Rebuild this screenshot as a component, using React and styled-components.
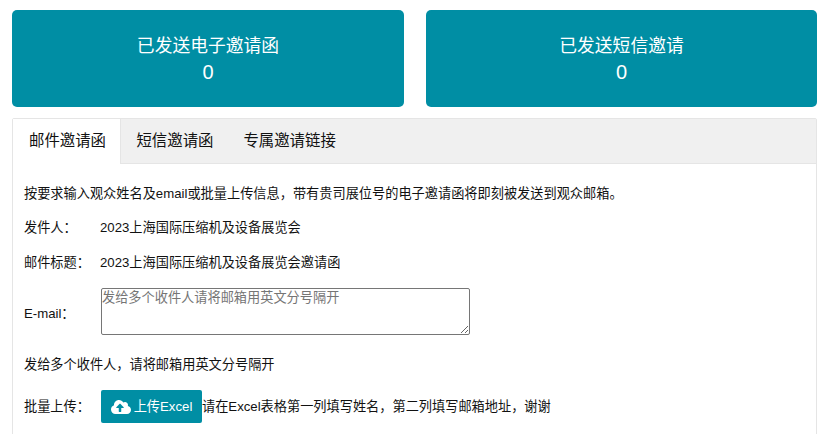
import React from "react";
import styled, { createGlobalStyle } from "styled-components";
import { FaCloudUploadAlt } from "react-icons/fa";

const colors = {
  teal: "#008ea4",
  border: "#e5e5e5",
  tabBar: "#f0f0f0",
  text: "#111111",
};

const GlobalStyle = createGlobalStyle`
  html, body {
    margin: 0;
    padding: 0;
    background: #fff;
    overflow: hidden;
    font-family: "Liberation Sans", "Noto Sans CJK SC", sans-serif;
    color: ${colors.text};
  }
`;

const Page = styled.div`
  width: 827px;
  height: 434px;
  overflow: hidden;
  box-sizing: border-box;
  padding: 10px 10px 0 12px;
`;

const StatRow = styled.div`
  display: grid;
  grid-template-columns: 392px 391px;
  column-gap: 22px;
`;

const StatCard = styled.div`
  height: 97px;
  background: ${colors.teal};
  border-radius: 5px;
  color: #fff;
  display: flex;
  flex-direction: column;
  align-items: center;
  justify-content: center;
  font-size: 17.8px;
  line-height: 26px;
`;

const StatValue = styled.div`
  font-size: 20px;
`;

const TabBox = styled.div`
  margin-top: 11px;
  width: 805px;
  border: 1px solid ${colors.border};
  border-radius: 2px 2px 0 0;
  box-sizing: border-box;
`;

const TabBar = styled.div`
  display: flex;
  height: 45px;
  background: ${colors.tabBar};
  border-bottom: 1px solid ${colors.border};
  box-sizing: border-box;
`;

const Tab = styled.div`
  padding: ${(p) => (p.$active ? "0 14.5px 0 16px" : "0 15px")};
  height: ${(p) => (p.$active ? "45px" : "44px")};
  line-height: 44px;
  font-size: 15.4px;
  box-sizing: border-box;
  background: ${(p) => (p.$active ? "#fff" : "transparent")};
  border-right: ${(p) => (p.$active ? `1px solid ${colors.border}` : "none")};
`;

const TabContent = styled.div`
  padding: 21px 11px 0;
  font-size: 13.2px;
  line-height: 18px;
`;

const Row = styled.div`
  display: flex;
  align-items: center;
  margin-bottom: ${(p) => p.$gap ?? 17}px;
`;

const Label = styled.div`
  width: 76px;
  flex: none;
  padding-top: ${(p) => p.$drop ?? 0}px;
`;

const EmailInput = styled.textarea`
  width: 369px;
  height: 47px;
  margin: 0 0 0 1px;
  padding: 0;
  box-sizing: border-box;
  border: 1px solid #767676;
  border-radius: 2px;
  font-family: inherit;
  font-size: 13.2px;
  line-height: 18px;
  background: #fff;

  &::placeholder {
    color: #757575;
  }
`;

const UploadButton = styled.div`
  width: 101px;
  height: 33px;
  margin-left: 1px;
  background: ${colors.teal};
  border-radius: 2px;
  color: #fff;
  font-size: 13.2px;
  display: flex;
  align-items: center;
  justify-content: center;
  gap: 3px;
`;

const App = () => {
  return (
    <Page>
      <GlobalStyle />
      <StatRow>
        <StatCard>
          <div>已发送电子邀请函</div>
          <StatValue>0</StatValue>
        </StatCard>
        <StatCard>
          <div>已发送短信邀请</div>
          <StatValue>0</StatValue>
        </StatCard>
      </StatRow>
      <TabBox>
        <TabBar>
          <Tab $active>邮件邀请函</Tab>
          <Tab>短信邀请函</Tab>
          <Tab>专属邀请链接</Tab>
        </TabBar>
        <TabContent>
          <Row $gap={16}>按要求输入观众姓名及email或批量上传信息，带有贵司展位号的电子邀请函将即刻被发送到观众邮箱。</Row>
          <Row>
            <Label>发件人：</Label>
            <div>2023上海国际压缩机及设备展览会</div>
          </Row>
          <Row $gap={16}>
            <Label>邮件标题：</Label>
            <div>2023上海国际压缩机及设备展览会邀请函</div>
          </Row>
          <Row $gap={21}>
            <Label $drop={4}>E-mail：</Label>
            <EmailInput placeholder="发给多个收件人请将邮箱用英文分号隔开" />
          </Row>
          <Row $gap={16}>发给多个收件人，请将邮箱用英文分号隔开</Row>
          <Row>
            <Label>批量上传：</Label>
            <UploadButton>
              <FaCloudUploadAlt size={20} />
              上传Excel
            </UploadButton>
            <div>请在Excel表格第一列填写姓名，第二列填写邮箱地址，谢谢</div>
          </Row>
        </TabContent>
      </TabBox>
    </Page>
  );
};

export default App;
